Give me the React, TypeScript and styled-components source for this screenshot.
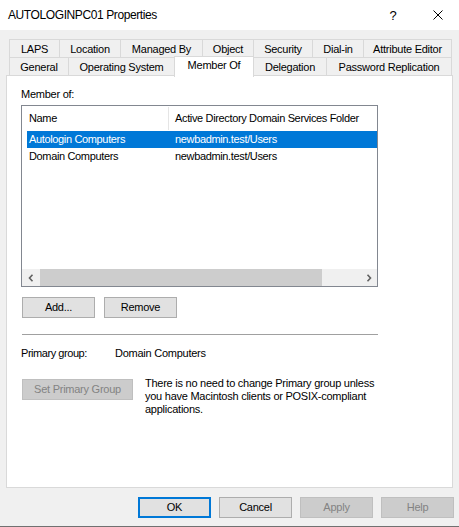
import styled, { createGlobalStyle, css } from "styled-components";

const GlobalStyle = createGlobalStyle`
  html, body {
    margin: 0;
    padding: 0;
    background: #f0f0f0;
    overflow: hidden;
  }
  * {
    box-sizing: border-box;
  }
`;

const topTabs = [
  { label: "LAPS", width: 51 },
  { label: "Location", width: 62 },
  { label: "Managed By", width: 83 },
  { label: "Object", width: 52 },
  { label: "Security", width: 60 },
  { label: "Dial-in", width: 52 },
  { label: "Attribute Editor", width: 89 },
];

const bottomTabs = [
  { label: "General", width: 60 },
  { label: "Operating System", width: 107 },
  { label: "Member Of", width: 80, active: true },
  { label: "Delegation", width: 74 },
  { label: "Password Replication", width: 126 },
];

const groups = [
  { name: "Autologin Computers", folder: "newbadmin.test/Users", selected: true },
  { name: "Domain Computers", folder: "newbadmin.test/Users" },
];

export default function App() {
  return (
    <>
      <GlobalStyle />
      <Window>
        <TitleBar>
          <Title>AUTOLOGINPC01 Properties</Title>
          <CaptionButton $width={48}>?</CaptionButton>
          <CaptionButton $width={42}>
            <svg width="10" height="10" viewBox="0 0 10 10">
              <path d="M0.5 0.5 L9.5 9.5 M9.5 0.5 L0.5 9.5" stroke="#000" strokeWidth="1" />
            </svg>
          </CaptionButton>
        </TitleBar>

        <TabStrip>
          <TabRow>
            {topTabs.map((t) => (
              <Tab key={t.label} $width={t.width}>
                {t.label}
              </Tab>
            ))}
          </TabRow>
          <TabRow $lower>
            {bottomTabs.map((t) => (
              <Tab key={t.label} $width={t.width} $active={t.active}>
                {t.label}
              </Tab>
            ))}
          </TabRow>
        </TabStrip>

        <Panel>
          <Label>Member of:</Label>
          <ListBox>
            <ListHeader>
              <HeaderCell $width={146}>Name</HeaderCell>
              <HeaderDivider />
              <HeaderCell>Active Directory Domain Services Folder</HeaderCell>
            </ListHeader>
            <ListRows>
              {groups.map((g) => (
                <ListRow key={g.name} $selected={g.selected}>
                  <RowCell $width={148}>{g.name}</RowCell>
                  <RowCell>{g.folder}</RowCell>
                </ListRow>
              ))}
            </ListRows>
            <ScrollBar>
              <ScrollArrow>
                <svg width="6" height="8" viewBox="0 0 6 8">
                  <path d="M4.5 0.8 L1.5 4 L4.5 7.2" stroke="#606060" strokeWidth="1.6" fill="none" />
                </svg>
              </ScrollArrow>
              <ScrollTrack>
                <ScrollThumb />
              </ScrollTrack>
              <ScrollArrow>
                <svg width="6" height="8" viewBox="0 0 6 8">
                  <path d="M1.5 0.8 L4.5 4 L1.5 7.2" stroke="#606060" strokeWidth="1.6" fill="none" />
                </svg>
              </ScrollArrow>
            </ScrollBar>
          </ListBox>

          <ButtonRow>
            <Button>Add...</Button>
            <Button>Remove</Button>
          </ButtonRow>

          <Separator />

          <InfoRow>
            <InfoLabel>Primary group:</InfoLabel>
            <span>Domain Computers</span>
          </InfoRow>

          <PrimaryRow>
            <Button $width={111} $disabled>
              Set Primary Group
            </Button>
            <Note>
              There is no need to change Primary group unless
              <br />
              you have Macintosh clients or POSIX-compliant
              <br />
              applications.
            </Note>
          </PrimaryRow>
        </Panel>

        <Footer>
          <Button $default>OK</Button>
          <Button>Cancel</Button>
          <Button $disabled>Apply</Button>
          <Button $disabled>Help</Button>
        </Footer>
      </Window>
    </>
  );
}

const uiFont = css`
  font-family: "Liberation Sans", Arial, sans-serif;
  font-size: 11px;
  letter-spacing: -0.25px;
  line-height: 13px;
  color: #000;
`;

const Window = styled.div`
  ${uiFont};
  width: 459px;
  height: 527px;
  display: flex;
  flex-direction: column;
  background: #f0f0f0;
  border-bottom: 1px solid #707070;
`;

const TitleBar = styled.div`
  height: 30px;
  flex-shrink: 0;
  display: flex;
  align-items: center;
  padding-left: 8px;
  background: #fff;
`;

const Title = styled.div`
  flex: 1;
  font-size: 12px;
  letter-spacing: -0.4px;
`;

const CaptionButton = styled.div<{ $width: number }>`
  width: ${({ $width }) => $width}px;
  height: 30px;
  display: flex;
  align-items: center;
  justify-content: center;
  font-size: 13px;
  letter-spacing: 0;
`;

const TabStrip = styled.div`
  padding: 9px 0 0 9px;
  position: relative;
  z-index: 1;
`;

const TabRow = styled.div<{ $lower?: boolean }>`
  display: flex;
  align-items: flex-end;
  height: 19px;
  ${({ $lower }) =>
    $lower &&
    css`
      margin-top: -1px;
      margin-bottom: -1px;
    `}
`;

const Tab = styled.div<{ $width: number; $active?: boolean }>`
  width: ${({ $width }) => $width}px;
  height: 19px;
  display: flex;
  align-items: center;
  justify-content: center;
  padding-top: 1px;
  border: 1px solid #d9d9d9;
  background: #f0f0f0;
  white-space: nowrap;

  & + & {
    margin-left: -1px;
  }

  ${({ $active }) =>
    $active &&
    css`
      height: 21px;
      margin-bottom: -1px;
      padding-top: 0;
      padding-bottom: 4px;
      background: #fff;
      border-bottom: none;
      position: relative;
      z-index: 2;
    `}
`;

const Panel = styled.div`
  margin-left: 6px;
  width: 447px;
  height: 413px;
  flex-shrink: 0;
  border: 1px solid #d9d9d9;
  background: #fff;
  padding: 12px 0 0 14px;
  display: flex;
  flex-direction: column;
`;

const Label = styled.div`
  height: 13px;
`;

const ListBox = styled.div`
  margin-top: 4px;
  width: 357px;
  height: 182px;
  border: 1px solid #828790;
  display: flex;
  flex-direction: column;
  letter-spacing: -0.35px;
`;

const ListHeader = styled.div`
  height: 25px;
  display: flex;
  align-items: center;
  flex-shrink: 0;
`;

const HeaderCell = styled.div<{ $width?: number }>`
  ${({ $width }) => ($width ? `width: ${$width}px;` : "flex: 1;")}
  padding-left: ${({ $width }) => ($width ? 7 : 6)}px;
  white-space: nowrap;
`;

const HeaderDivider = styled.div`
  width: 1px;
  height: 23px;
  background: #e5e5e5;
`;

const ListRows = styled.div`
  flex: 1;
  padding-left: 5px;
`;

const ListRow = styled.div<{ $selected?: boolean }>`
  height: 17px;
  display: flex;
  align-items: center;
  background: ${({ $selected }) => ($selected ? "#0078d7" : "transparent")};
  color: ${({ $selected }) => ($selected ? "#fff" : "#000")};
`;

const RowCell = styled.div<{ $width?: number }>`
  ${({ $width }) => ($width ? `width: ${$width}px; padding-left: 2px;` : "flex: 1;")}
  white-space: nowrap;
`;

const ScrollBar = styled.div`
  height: 17px;
  display: flex;
  background: #f0f0f0;
  flex-shrink: 0;
`;

const ScrollArrow = styled.div`
  width: 17px;
  display: flex;
  align-items: center;
  justify-content: center;
`;

const ScrollTrack = styled.div`
  flex: 1;
  display: flex;
`;

const ScrollThumb = styled.div`
  width: 282px;
  margin-left: 1px;
  background: #cdcdcd;
`;

const ButtonRow = styled.div`
  display: flex;
  gap: 9px;
  margin-top: 10px;
  padding-left: 1px;
`;

const Button = styled.div<{ $width?: number; $disabled?: boolean; $default?: boolean }>`
  width: ${({ $width }) => $width ?? 73}px;
  height: 21px;
  display: flex;
  align-items: center;
  justify-content: center;
  background: #e1e1e1;
  border: 1px solid #adadad;
  white-space: nowrap;
  flex-shrink: 0;

  ${({ $disabled }) =>
    $disabled &&
    css`
      background: #cccccc;
      border-color: #bfbfbf;
      color: #838383;
    `}

  ${({ $default }) =>
    $default &&
    css`
      border: 2px solid #0078d7;
    `}
`;

const Separator = styled.div`
  width: 356px;
  height: 1px;
  margin: 16px 0 0 1px;
  background: #a0a0a0;
`;

const InfoRow = styled.div`
  display: flex;
  margin-top: 12px;
  height: 13px;
`;

const InfoLabel = styled.span`
  width: 94px;
  letter-spacing: -0.45px;
`;

const PrimaryRow = styled.div`
  display: flex;
  align-items: flex-start;
  margin-top: 17px;
  padding-left: 1px;

  & > ${Button} {
    margin-top: 2px;
  }
`;

const Note = styled.div`
  margin-left: 12px;
  white-space: nowrap;
`;

const Footer = styled.div`
  display: flex;
  justify-content: flex-end;
  gap: 8px;
  margin-top: 9px;
  padding-right: 5px;
`;
